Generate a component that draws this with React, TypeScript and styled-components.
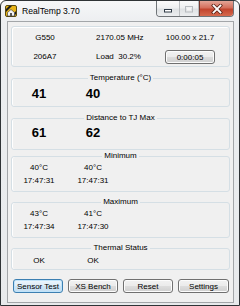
import React from "react";
import styled, { createGlobalStyle } from "styled-components";

const GlobalStyle = createGlobalStyle`
  html, body {
    margin: 0;
    padding: 0;
    background: #ffffff;
  }
  body {
    font-family: "Liberation Sans", Arial, sans-serif;
    color: #000;
  }
`;

const Window = styled.div`
  width: 240px;
  height: 306px;
  box-sizing: border-box;
  border: 1px solid #2f3336;
  border-radius: 6px 6px 0 0;
  background: linear-gradient(#f6f7f8, #eceef0 22px, #e8eaec);
  display: flex;
  flex-direction: column;
`;

const TitleBar = styled.div`
  height: 20px;
  display: flex;
  align-items: flex-start;
  flex-shrink: 0;
`;

const AppIcon = styled.svg`
  width: 12px;
  height: 12px;
  margin: 4px 0 0 4px;
  flex-shrink: 0;
`;

const Title = styled.span`
  margin: 5px 0 0 5px;
  font-size: 8.6px;
  line-height: 10px;
  color: #000;
`;

const Captions = styled.div`
  margin-left: auto;
  margin-right: 5px;
  display: flex;
  height: 15px;
  border: 1px solid #6f7478;
  border-top: none;
  border-radius: 0 0 4px 4px;
  overflow: hidden;
`;

const CaptionButton = styled.div<{ $w: number; $close?: boolean }>`
  width: ${(p) => p.$w}px;
  height: 100%;
  display: flex;
  align-items: center;
  justify-content: center;
  border-left: ${(p) => (p.$close ? "1px solid #7a3a30" : "none")};
  border-right: ${(p) => (p.$close ? "none" : "1px solid #b9bcbf")};
  background: ${(p) =>
    p.$close
      ? "linear-gradient(#e3a597, #d46f5c 45%, #c2452e 55%, #d56a4e)"
      : "linear-gradient(#fbfbfb, #eef0f1 45%, #dfe2e4 55%, #eceef0)"};
`;

const Client = styled.div`
  flex: 1;
  margin: 0 5px 2px 6px;
  border: 1px solid #a3a6a9;
  background: #f0f0f0;
  display: flex;
  flex-direction: column;
  font-size: 8px;
  color: #000;
`;

const InfoBox = styled.div`
  margin: 4px 3px 0 3px;
  border: 1px solid #d5dfe5;
  border-radius: 3px;
  box-shadow: inset 1px 1px 0 #ffffff;
  padding: 5px 0 2px 0;
  display: grid;
  grid-template-columns: 66px 87px 50px;
  grid-template-rows: 12px 14px;
  row-gap: 6px;
  align-items: center;
`;

const Cell = styled.div<{ $center?: boolean; $indent?: boolean }>`
  text-align: ${(p) => (p.$center ? "center" : "left")};
  padding-left: ${(p) => (p.$indent ? "18px" : "0")};
  line-height: 12px;
  white-space: nowrap;
`;

const Group = styled.fieldset<{ $mt: number; $pt: number; $pb: number }>`
  margin: ${(p) => p.$mt}px 3px 0 3px;
  padding: ${(p) => p.$pt}px 0 ${(p) => p.$pb}px 0;
  border: 1px solid #d5dfe5;
  border-radius: 3px;
  box-shadow: inset 1px 0 0 #ffffff;
  min-inline-size: 0;
`;

const Legend = styled.legend`
  margin: 0 auto;
  padding: 0 2px;
  font-size: 8px;
  line-height: 8px;
  color: #000;
`;

const Values = styled.div<{ $lh: number }>`
  display: grid;
  grid-template-columns: 54px 54px;
  grid-auto-rows: ${(p) => p.$lh}px;
  align-items: center;
  text-align: center;
  line-height: ${(p) => p.$lh}px;
`;

const BigValue = styled.div`
  font-size: 13px;
  font-weight: bold;
  color: #000;
`;

const Small = styled.div`
  white-space: nowrap;
`;

const ButtonRow = styled.div`
  margin: 9px 4px 0 5px;
  display: flex;
  justify-content: space-between;
`;

const PushButton = styled.button<{ $default?: boolean; $w?: number }>`
  width: ${(p) => p.$w ?? 50}px;
  height: 14px;
  padding: 0;
  box-sizing: border-box;
  font-family: "Liberation Sans", Arial, sans-serif;
  font-size: 8px;
  color: #000;
  border-radius: 3px;
  border: 1px solid ${(p) => (p.$default ? "#3c7fb1" : "#707070")};
  background: ${(p) =>
    p.$default
      ? "linear-gradient(#edf6fc, #dcecf8 50%, #cde4f5 51%, #c4def2)"
      : "linear-gradient(#f2f2f2, #ebebeb 50%, #dddddd 51%, #cfcfcf)"};
  box-shadow: inset 0 0 0 1px ${(p) => (p.$default ? "#bfe3fa" : "#fcfcfc")};
`;

const RealTempIcon = () => (
  <AppIcon viewBox="0 0 12 12">
    <rect x="0.5" y="0.5" width="11" height="11" rx="1.5" fill="#e8b418" stroke="#5a4a10" />
    <path d="M1 4 L4 1 L7 1 L1 7 Z" fill="#1e1e1e" />
    <path d="M6 11 L11 6 L11 9 L9 11 Z" fill="#1e1e1e" />
    <path d="M2.5 11 L2.5 7.5 L6 4.5 L9.5 7.5 L9.5 11 Z" fill="#f4f4f4" stroke="#333" strokeWidth="0.6" />
    <rect x="5" y="8" width="2" height="3" fill="#555" />
  </AppIcon>
);

const MinimizeGlyph = () => (
  <svg width="10" height="10" viewBox="0 0 10 10">
    <rect x="1.5" y="5.5" width="7" height="2.5" fill="#ffffff" stroke="#2e3a46" />
  </svg>
);

const MaximizeGlyph = () => (
  <svg width="10" height="10" viewBox="0 0 10 10">
    <rect x="1.5" y="2.5" width="7" height="5.5" fill="none" stroke="#b8bcc0" />
    <rect x="3" y="4" width="4" height="2.5" fill="#f6f6f6" />
  </svg>
);

const CloseGlyph = () => (
  <svg width="12" height="10" viewBox="0 0 12 10">
    <path d="M2.5 1.5 L9.5 8.5 M9.5 1.5 L2.5 8.5" stroke="#5a2418" strokeWidth="3.4" strokeLinecap="square" />
    <path d="M2.5 1.5 L9.5 8.5 M9.5 1.5 L2.5 8.5" stroke="#ffffff" strokeWidth="1.8" strokeLinecap="square" />
  </svg>
);

type Pair = [string, string];

const minimum: Pair[] = [
  ["40°C", "40°C"],
  ["17:47:31", "17:47:31"],
];

const maximum: Pair[] = [
  ["43°C", "41°C"],
  ["17:47:34", "17:47:30"],
];

const App = () => {
  return (
    <>
      <GlobalStyle />
      <Window>
        <TitleBar>
          <RealTempIcon />
          <Title>RealTemp 3.70</Title>
          <Captions>
            <CaptionButton $w={22}>
              <MinimizeGlyph />
            </CaptionButton>
            <CaptionButton $w={18}>
              <MaximizeGlyph />
            </CaptionButton>
            <CaptionButton $w={33} $close>
              <CloseGlyph />
            </CaptionButton>
          </Captions>
        </TitleBar>
        <Client>
          <InfoBox>
            <Cell $center>G550</Cell>
            <Cell $indent>2170.05 MHz</Cell>
            <Cell $center>100.00 x 21.7</Cell>
            <Cell $center>206A7</Cell>
            <Cell $indent>Load&nbsp; 30.2%</Cell>
            <PushButton type="button">0:00:05</PushButton>
          </InfoBox>

          <Group $mt={7} $pt={4} $pb={4}>
            <Legend>Temperature (°C)</Legend>
            <Values $lh={16}>
              <BigValue>41</BigValue>
              <BigValue>40</BigValue>
            </Values>
          </Group>

          <Group $mt={7} $pt={3} $pb={8}>
            <Legend>Distance to TJ Max</Legend>
            <Values $lh={16}>
              <BigValue>61</BigValue>
              <BigValue>62</BigValue>
            </Values>
          </Group>

          <Group $mt={2} $pt={1} $pb={4}>
            <Legend>Minimum</Legend>
            <Values $lh={13}>
              {minimum.flat().map((v, i) => (
                <Small key={i}>{v}</Small>
              ))}
            </Values>
          </Group>

          <Group $mt={6} $pt={1} $pb={4}>
            <Legend>Maximum</Legend>
            <Values $lh={13}>
              {maximum.flat().map((v, i) => (
                <Small key={i}>{v}</Small>
              ))}
            </Values>
          </Group>

          <Group $mt={6} $pt={2} $pb={2}>
            <Legend>Thermal Status</Legend>
            <Values $lh={13}>
              <Small>OK</Small>
              <Small>OK</Small>
            </Values>
          </Group>

          <ButtonRow>
            <PushButton type="button" $default>
              Sensor Test
            </PushButton>
            <PushButton type="button">XS Bench</PushButton>
            <PushButton type="button">Reset</PushButton>
            <PushButton type="button" $w={51}>
              Settings
            </PushButton>
          </ButtonRow>
        </Client>
      </Window>
    </>
  );
};

export default App;
